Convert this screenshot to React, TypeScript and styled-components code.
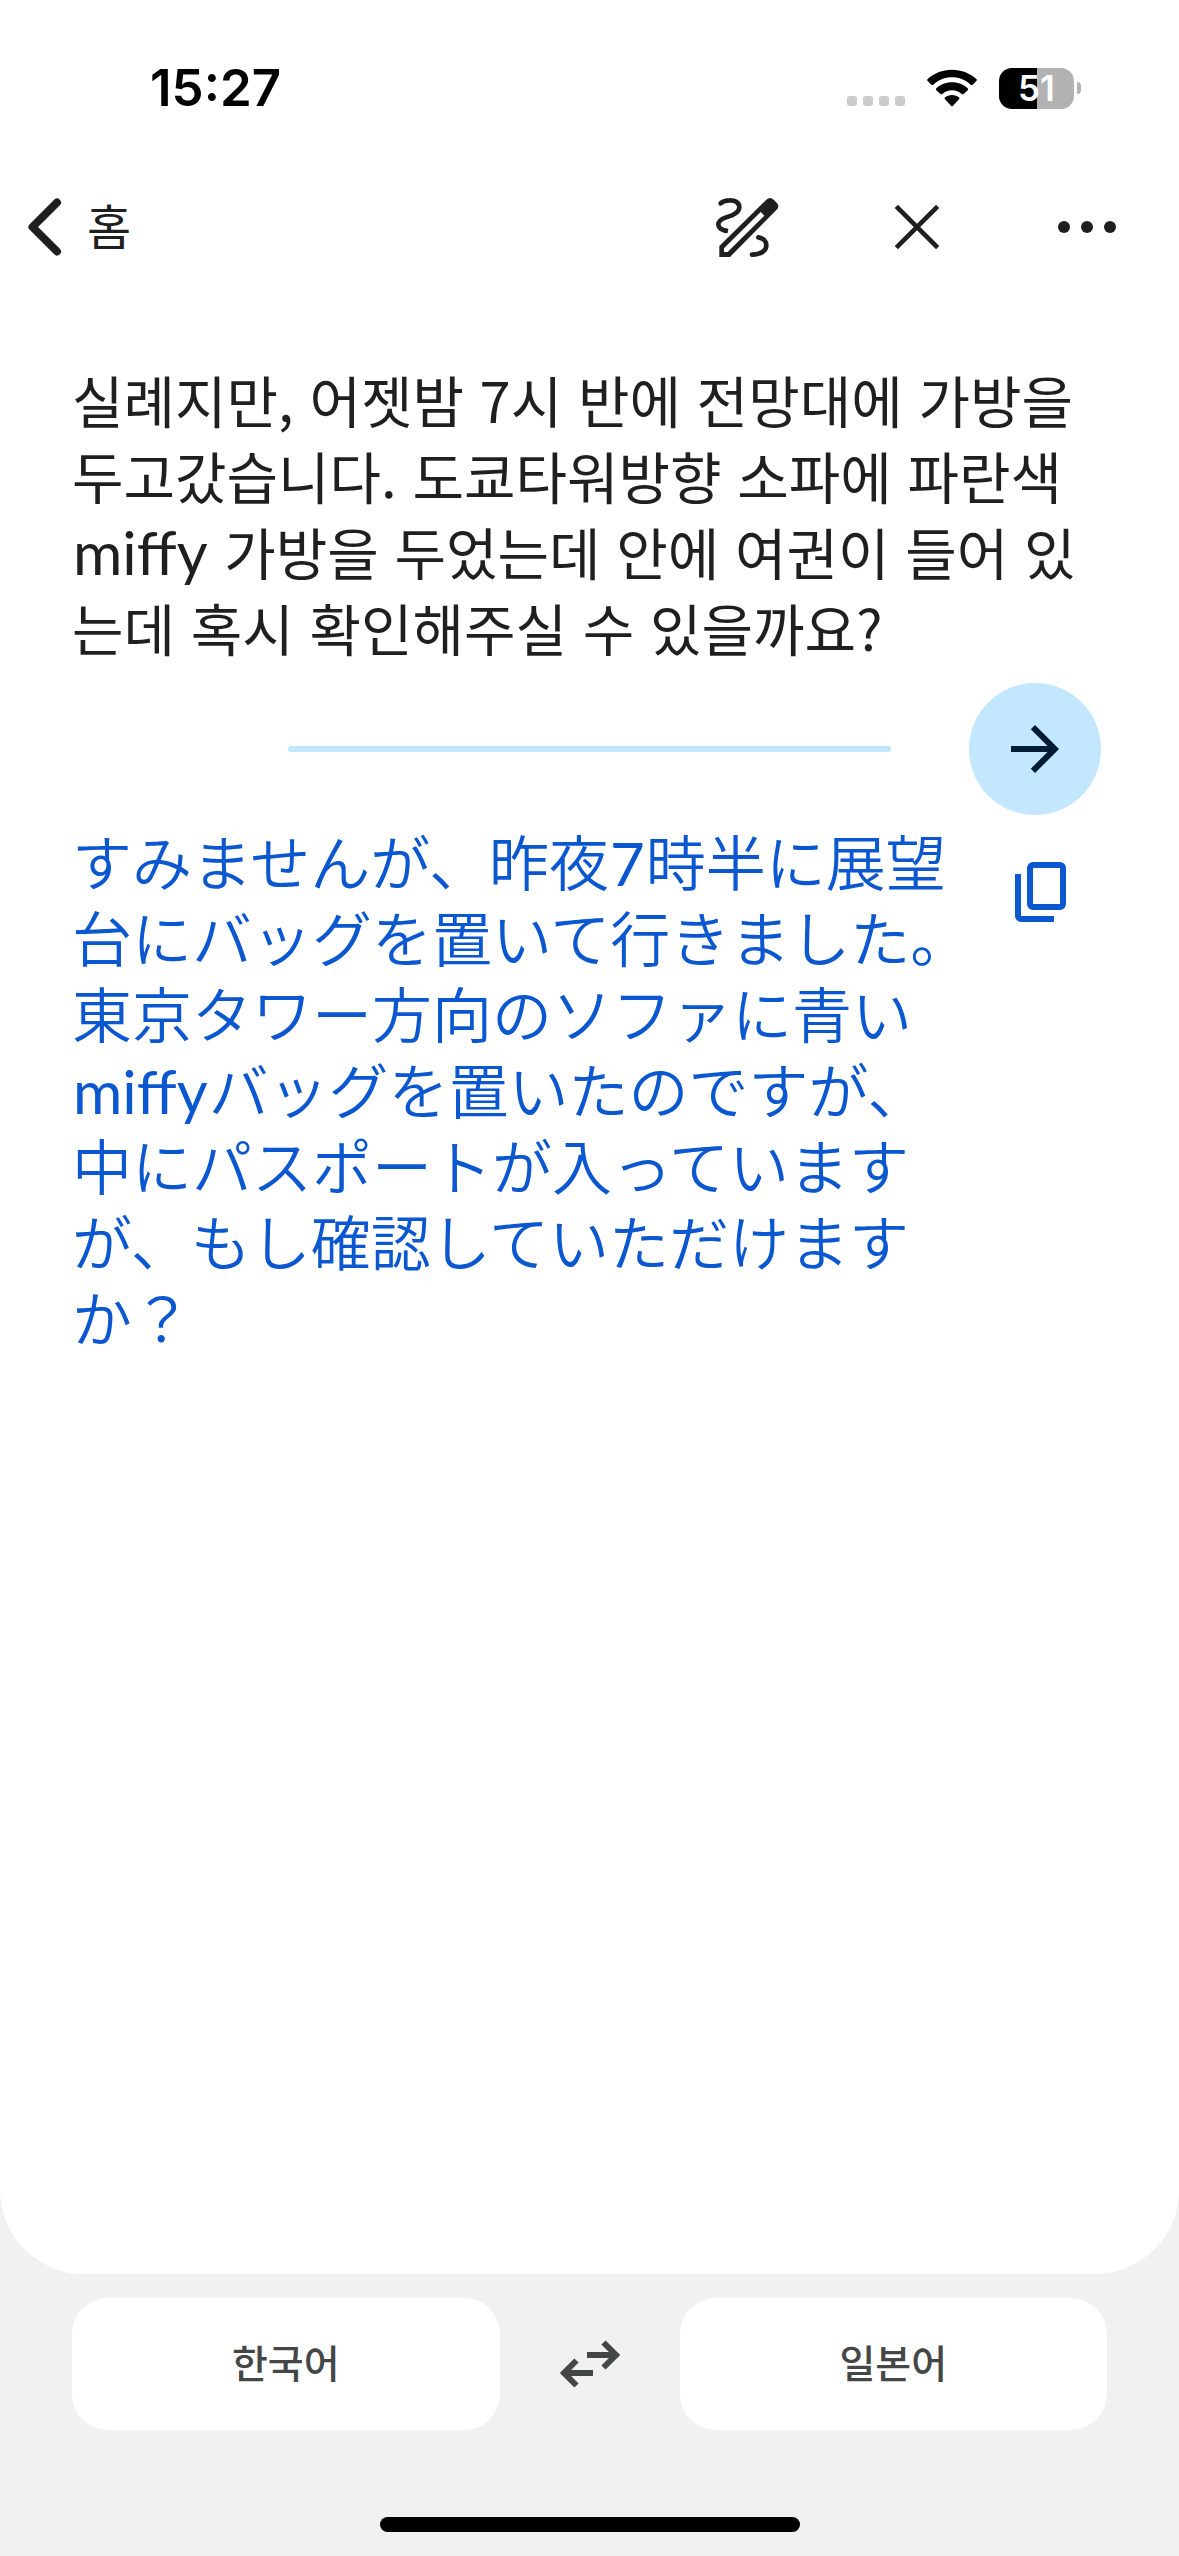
import React from "react";
import styled, { createGlobalStyle } from "styled-components";

const INK = "#1f1f1f";
const BLUE = "#0b57d0";
const PALE = "#c2e7ff";
const TRAY = "#f1f1f1";

const GlobalStyle = createGlobalStyle`
  * { box-sizing: border-box; }
  body { margin: 0; background: ${TRAY}; }
  button { border: 0; padding: 0; margin: 0; background: none; color: inherit; font: inherit; cursor: pointer; }
  svg { display: block; }
`;

const Screen = styled.div`
  min-height: 100vh;
  display: flex;
  flex-direction: column;
  color: ${INK};
  font-family: "Noto Sans CJK KR", sans-serif;
`;

const Sheet = styled.div`
  flex: 1;
  background: #fff;
  border-radius: 0 0 84px 84px;
`;

const StatusBar = styled.div`
  height: 176px;
  padding: 0 98px 0 150px;
  display: flex;
  align-items: center;
  justify-content: space-between;
  color: #000;
  font-family: Inter, sans-serif;
  font-weight: 600;
`;

const Time = styled.time`
  font-size: 51px;
  line-height: 60px;
`;

const StatusIcons = styled.div`
  display: flex;
  align-items: center;
`;

const SignalDots = styled.div`
  display: flex;
  gap: 6px;
  padding-top: 26px;
  margin-right: 22px;
`;

const SignalDot = styled.span`
  width: 10px;
  height: 10px;
  border-radius: 3px;
  background: #ccc;
`;

const Battery = styled.div`
  width: 75px;
  height: 41px;
  margin: 0 3px 0 22px;
  border-radius: 13px;
  background: linear-gradient(to right, #000 51%, #b2b2b2 51%);
  color: #fff;
  font-size: 35px;
  line-height: 41px;
  text-align: center;
`;

const BatteryCap = styled.span`
  width: 4px;
  height: 12px;
  border-radius: 0 4px 4px 0;
  background: #b2b2b2;
`;

const NavBar = styled.header`
  height: 102px;
  padding: 0 56px 0 24px;
  display: flex;
  align-items: center;
  justify-content: space-between;
`;

const BackButton = styled.button`
  display: flex;
  align-items: center;
  gap: 21px;
  font-size: 48px;
  line-height: 66px;
`;

const BackLabel = styled.span`
  padding-bottom: 6px;
`;

const NavActions = styled.div`
  display: flex;
  align-items: center;
  gap: 98px;
`;

const IconButton = styled.button`
  display: grid;
  place-items: center;
  width: 72px;
  height: 72px;
`;

const SourceText = styled.p`
  margin: 0;
  padding: 83px 72px 0;
  font-size: 56px;
  line-height: 76px;
`;

const Latin = styled.span`
  display: inline-block;
  padding: 0 1px;
  font-family: Lato, sans-serif;
  font-size: 60px;
  line-height: 60px;
  font-weight: 400;
`;

const DividerRow = styled.div`
  display: grid;
  grid-template-columns: 210px 1fr 210px;
  align-items: center;
  padding: 0 78px;
  margin: 18px 0 7px;
`;

const Divider = styled.hr`
  grid-column: 2;
  width: 100%;
  height: 6px;
  margin: 0;
  border: 0;
  border-radius: 3px;
  background: ${PALE};
`;

const GoButton = styled.button`
  justify-self: end;
  width: 132px;
  height: 132px;
  border-radius: 50%;
  display: grid;
  place-items: center;
  background: ${PALE};
  color: #001d35;
`;

const ResultRow = styled.div`
  display: flex;
  align-items: flex-start;
  justify-content: space-between;
  padding: 0 101px 0 72px;
  color: ${BLUE};
`;

const ResultText = styled.p`
  flex: 1;
  margin: 0 28px 0 0;
  font-family: "Noto Sans CJK JP", sans-serif;
  font-size: 60px;
  line-height: 76px;
  font-weight: 350;
`;

const CopyButton = styled(IconButton)`
  margin-top: 34px;
`;

const LanguageBar = styled.div`
  display: grid;
  grid-template-columns: 1fr 180px 1fr;
  align-items: center;
  padding: 24px 72px 0;
  color: #444746;
`;

const LanguageButton = styled.button`
  height: 132px;
  padding-bottom: 7px;
  border-radius: 36px;
  background: #fff;
  font-size: 39px;
  line-height: 60px;
  font-weight: 500;
`;

const SwapButton = styled(IconButton)`
  justify-self: center;
`;

const HomeIndicator = styled.div`
  width: 420px;
  height: 15px;
  margin: 87px auto 24px;
  border-radius: 8px;
  background: #000;
`;

const WifiIcon = () => (
  <svg width="50" height="38" viewBox="0 0 150 114" fill="#000" aria-hidden="true">
    <path d="M75 2C46 2 20 13 2 30Q-1 33 2 36L13 47Q16 49 19 47C34 33 53 25 75 25S116 33 131 47Q134 49 137 47L148 36Q151 33 148 30C130 13 104 2 75 2Z" />
    <path d="M75 40C56 40 40 47 28 58Q25 61 28 64L40 75Q43 77 46 75C54 68 64 64 75 64S96 68 104 75Q107 77 110 75L122 64Q125 61 122 58C110 47 94 40 75 40Z" />
    <path d="M75 78C67 78 60 81 54 85Q51 88 54 91L72 110Q75 113 78 110L96 91Q99 88 96 85C90 81 83 78 75 78Z" />
  </svg>
);

const ChevronIcon = () => (
  <svg width="42" height="66" viewBox="0 0 42 66" fill="none" stroke="currentColor" strokeWidth="8" strokeLinecap="round" strokeLinejoin="round" aria-hidden="true">
    <path d="M33 8.500L8.500 33L33 57.500" />
  </svg>
);

const InkPenIcon = () => (
  <svg width="64" height="61" viewBox="105 471 192 183" fill="none" stroke="currentColor" strokeWidth="14" aria-hidden="true">
    <path strokeLinecap="round" d="M122 490C131 482 141 481 148 481C166 480 178 488 178 502C178 514 170 520 156 526L136 533C121 539 115 544 115 553C115 562 124 569 136 572" />
    <path d="M132 571L144 573" />
    <path strokeLinecap="round" d="M235 592C250 594 259 604 259 616C259 633 243 643 216 644" />
    <path strokeWidth="0" fill="currentColor" fillRule="evenodd" d="M118 651V618L259 479Q270 469 281 479L290 488Q300 499 290 509L150 651ZM132 636H143L253 527L242 516L132 625Z" />
  </svg>
);

const CloseIcon = () => (
  <svg width="46" height="46" viewBox="637 493 139 139" fill="none" stroke="currentColor" strokeWidth="14" aria-hidden="true">
    <path d="M644 500L769 625M769 500L644 625" />
  </svg>
);

const MoreIcon = () => (
  <svg width="60" height="14" viewBox="0 0 60 14" fill="currentColor" aria-hidden="true">
    <circle cx="7" cy="7" r="6" />
    <circle cx="30" cy="7" r="6" />
    <circle cx="53" cy="7" r="6" />
  </svg>
);

const ArrowIcon = () => (
  <svg width="72" height="72" viewBox="0 0 24 24" fill="currentColor" aria-hidden="true">
    <path d="M12 4l-1.410 1.410L16.170 11H4v2h12.170l-5.580 5.590L12 20l8-8z" />
  </svg>
);

const CopyIcon = () => (
  <svg width="72" height="72" viewBox="0 0 24 24" fill="currentColor" aria-hidden="true">
    <path d="M9 18a2 2 0 0 1-2-2V4a2 2 0 0 1 2-2h9a2 2 0 0 1 2 2v12a2 2 0 0 1-2 2H9Zm0-2h9V4H9v12Zm-4 6a2 2 0 0 1-2-2V6h2v14h11v2H5Z" />
  </svg>
);

const SwapIcon = () => (
  <svg width="60" height="48" viewBox="0 0 60 48" fill="none" stroke="currentColor" strokeWidth="6" aria-hidden="true">
    <path d="M27 15H55M43.500 2.500L56 15L43.500 27.500" />
    <path d="M33 33H5M16.500 20.500L4 33L16.500 45.500" />
  </svg>
);

export default function App() {
  return (
    <Screen lang="ko">
      <GlobalStyle />
      <Sheet>
        <StatusBar>
          <Time>15:27</Time>
          <StatusIcons>
            <SignalDots>
              {[0, 1, 2, 3].map((n) => (
                <SignalDot key={n} />
              ))}
            </SignalDots>
            <WifiIcon />
            <Battery>51</Battery>
            <BatteryCap />
          </StatusIcons>
        </StatusBar>

        <NavBar>
          <BackButton type="button">
            <ChevronIcon />
            <BackLabel>홈</BackLabel>
          </BackButton>
          <NavActions>
            <IconButton type="button" aria-label="필기">
              <InkPenIcon />
            </IconButton>
            <IconButton type="button" aria-label="닫기">
              <CloseIcon />
            </IconButton>
            <IconButton type="button" aria-label="더보기">
              <MoreIcon />
            </IconButton>
          </NavActions>
        </NavBar>

        <main>
          <SourceText>
            실례지만, 어젯밤 7시 반에 전망대에 가방을 두고갔습니다. 도쿄타워방향 소파에 파란색{" "}
            <Latin>miffy</Latin> 가방을 두었는데 안에 여권이 들어 있는데 혹시 확인해주실 수 있을까요?
          </SourceText>

          <DividerRow>
            <Divider />
            <GoButton type="button" aria-label="번역">
              <ArrowIcon />
            </GoButton>
          </DividerRow>

          <ResultRow>
            <ResultText lang="ja">
              すみませんが、昨夜<Latin>7</Latin>
              時半に展望台にバッグを置いて行きました。東京タワー方向のソファに青い<Latin>miffy</Latin>
              バッグを置いたのですが、中にパスポートが入っていますが、もし確認していただけますか？
            </ResultText>
            <CopyButton type="button" aria-label="복사">
              <CopyIcon />
            </CopyButton>
          </ResultRow>
        </main>
      </Sheet>

      <LanguageBar>
        <LanguageButton type="button">한국어</LanguageButton>
        <SwapButton type="button" aria-label="언어 전환">
          <SwapIcon />
        </SwapButton>
        <LanguageButton type="button">일본어</LanguageButton>
      </LanguageBar>
      <HomeIndicator />
    </Screen>
  );
}
